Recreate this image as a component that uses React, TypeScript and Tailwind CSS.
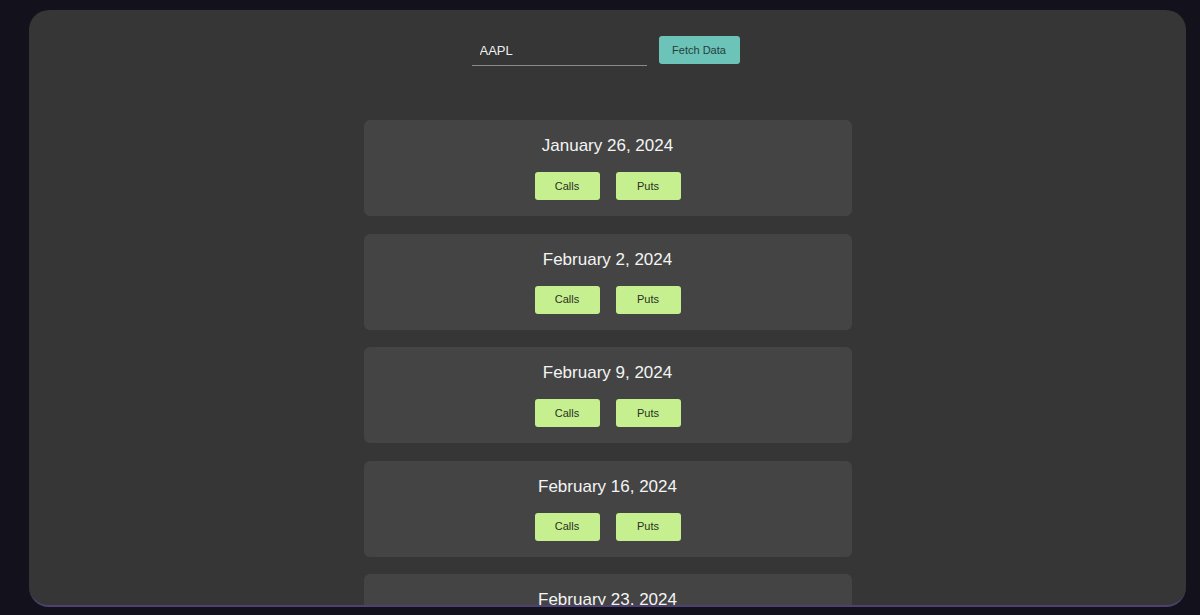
import { useState } from "react";

const DATES = [
  "January 26, 2024",
  "February 2, 2024",
  "February 9, 2024",
  "February 16, 2024",
  "February 23, 2024",
  "March 1, 2024",
];

function ExpiryCard({ date }: { date: string }) {
  return (
    <div className="w-[488px] rounded-[6px] bg-[#434443] pt-[14px] pb-[16px] flex flex-col items-center">
      <h2 className="text-[17px] leading-[24px] text-[#f4f4f4]">{date}</h2>
      <div className="mt-[14px] flex gap-[16px]">
        <button className="w-[65px] h-[28px] rounded-[3px] bg-[#c6ef8f] text-[11px] text-[#2a2f22]">Calls</button>
        <button className="w-[65px] h-[28px] rounded-[3px] bg-[#c6ef8f] text-[11px] text-[#2a2f22]">Puts</button>
      </div>
    </div>
  );
}

export default function App() {
  const [ticker, setTicker] = useState("AAPL");

  return (
    <div className="min-h-[615px] bg-[#13111c] pt-[10px] pl-[29px] pr-[14px] font-['Liberation_Sans',Arial,sans-serif]">
      <div className="h-[597px] overflow-hidden rounded-[20px] border-b-2 border-[#4e4070] bg-[#353635]">
        <div className="flex justify-center items-start gap-[12px] pt-[26px] pr-[4px]">
          <input
            value={ticker}
            onChange={(e) => setTicker(e.target.value)}
            className="w-[175px] h-[30px] bg-transparent border-b border-[#8a8a8a] px-[8px] text-[13px] text-[#eeeeee] outline-none"
          />
          <button className="h-[28px] w-[81px] rounded-[3px] bg-[#6cc3b7] text-[11px] text-[#23403c]">Fetch Data</button>
        </div>
        <div className="mt-[54px] flex flex-col items-center gap-[17.5px]">
          {DATES.map((d) => (
            <ExpiryCard key={d} date={d} />
          ))}
        </div>
      </div>
    </div>
  );
}
